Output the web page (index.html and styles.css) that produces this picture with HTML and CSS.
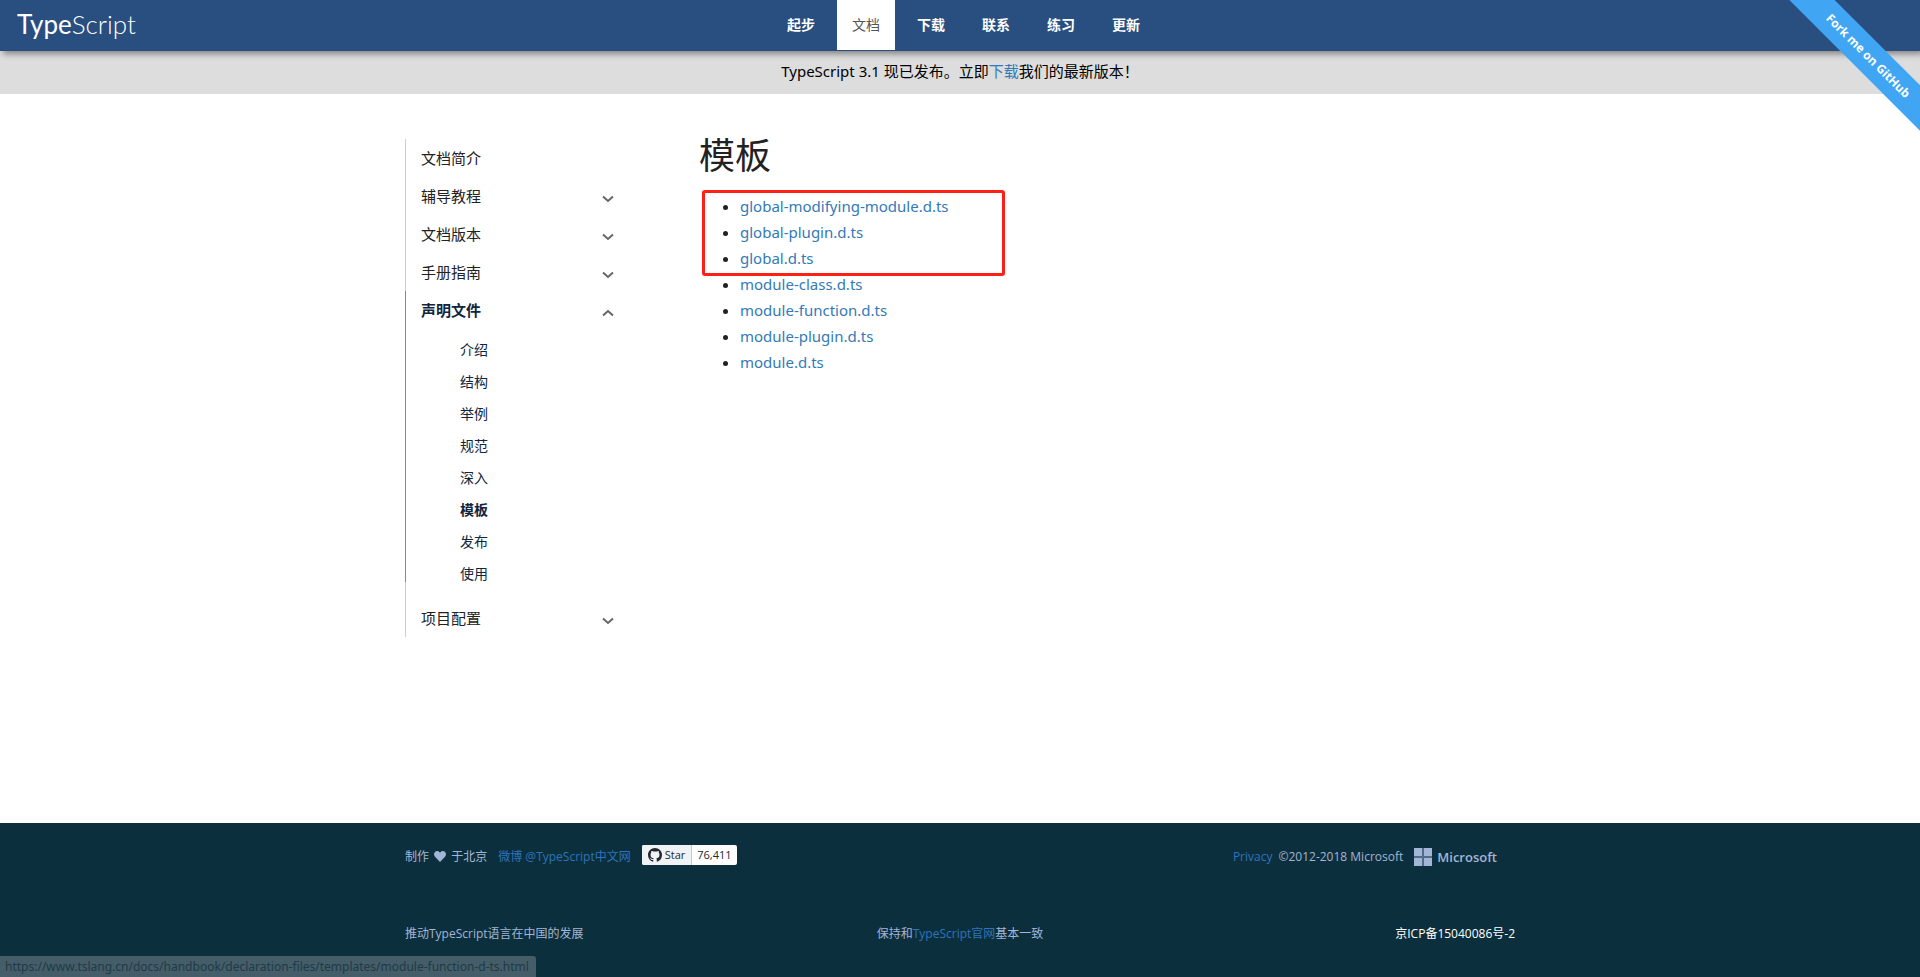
FILE: index.html
```html
<!DOCTYPE html>
<html lang="zh-CN">
<head>
<meta charset="utf-8">
<title>模板 · TypeScript</title>
<link rel="stylesheet" href="styles.css">
</head>
<body>
<header class="topbar">
  <a class="logo" href="#"><span class="logo-type">Type</span><span class="logo-script">Script</span></a>
  <nav class="nav">
    <a href="#">起步</a>
    <a href="#" class="active">文档</a>
    <a href="#">下载</a>
    <a href="#">联系</a>
    <a href="#">练习</a>
    <a href="#">更新</a>
  </nav>
</header>
<div class="ribbon-wrap"><a class="ribbon" href="#">Fork me on GitHub</a></div>
<div class="banner">TypeScript 3.1 现已发布。立即<a href="#">下载</a>我们的最新版本！</div>

<main class="container main">
  <aside class="sidebar">
    <ul class="menu">
      <li><a class="menu-link" href="#">文档简介</a></li>
      <li><button class="menu-link" type="button">辅导教程<svg class="chevron" viewBox="0 0 12 8"><path d="M1 1.500 6 6l5-4.500"/></svg></button></li>
      <li><button class="menu-link" type="button">文档版本<svg class="chevron" viewBox="0 0 12 8"><path d="M1 1.500 6 6l5-4.500"/></svg></button></li>
      <li><button class="menu-link" type="button">手册指南<svg class="chevron" viewBox="0 0 12 8"><path d="M1 1.500 6 6l5-4.500"/></svg></button></li>
      <li class="open">
        <button class="menu-link" type="button" aria-expanded="true">声明文件<svg class="chevron" viewBox="0 0 12 8"><path d="M1 6.500 6 2l5 4.500"/></svg></button>
        <ul class="submenu">
          <li><a href="#">介绍</a></li>
          <li><a href="#">结构</a></li>
          <li><a href="#">举例</a></li>
          <li><a href="#">规范</a></li>
          <li><a href="#">深入</a></li>
          <li><a href="#" class="current">模板</a></li>
          <li><a href="#">发布</a></li>
          <li><a href="#">使用</a></li>
        </ul>
      </li>
      <li><button class="menu-link" type="button">项目配置<svg class="chevron" viewBox="0 0 12 8"><path d="M1 1.500 6 6l5-4.500"/></svg></button></li>
    </ul>
  </aside>
  <article class="content">
    <h1>模板</h1>
    <div class="list-area">
      <ul class="files">
        <li><a href="#">global-modifying-module.d.ts</a></li>
        <li><a href="#">global-plugin.d.ts</a></li>
        <li><a href="#">global.d.ts</a></li>
        <li><a href="#">module-class.d.ts</a></li>
        <li><a href="#">module-function.d.ts</a></li>
        <li><a href="#">module-plugin.d.ts</a></li>
        <li><a href="#">module.d.ts</a></li>
      </ul>
      <div class="marker"></div>
    </div>
  </article>
</main>

<footer class="footer">
  <div class="container">
    <div class="foot-top">
      <div class="foot-group">
        <span class="made">制作 <svg class="heart" viewBox="0 0 12 11"><path d="M6 11 1 5.800C-.4 4.200-.2 1.900 1.200.8 2.700-.4 4.800 0 6 1.700 7.200 0 9.300-.4 10.800.8c1.400 1.100 1.600 3.400.2 5z"/></svg> 于北京</span>
        <a href="#">微博 @TypeScript中文网</a>
        <a class="star" href="#">
          <span class="star-label"><svg viewBox="0 0 16 16"><path d="M8 0C3.580 0 0 3.580 0 8c0 3.540 2.290 6.530 5.470 7.590.4.070.55-.17.55-.38 0-.19-.01-.82-.01-1.490-2.010.37-2.530-.49-2.690-.94-.09-.23-.48-.94-.82-1.130-.28-.15-.68-.52-.01-.53.63-.01 1.080.58 1.230.82.72 1.210 1.870.87 2.330.66.07-.52.28-.87.51-1.070-1.780-.2-3.640-.89-3.640-3.950 0-.87.31-1.590.82-2.150-.08-.2-.36-1.020.08-2.120 0 0 .67-.21 2.200.82.64-.18 1.320-.27 2-.27s1.360.09 2 .27c1.530-1.040 2.200-.82 2.200-.82.44 1.100.16 1.920.08 2.120.51.56.82 1.270.82 2.150 0 3.070-1.870 3.750-3.650 3.950.29.25.54.73.54 1.480 0 1.070-.01 1.930-.01 2.200 0 .21.15.46.55.38A8.010 8.010 0 0 0 16 8c0-4.420-3.580-8-8-8z"/></svg>Star</span><span class="star-count">76,411</span>
        </a>
      </div>
      <div class="foot-group foot-ms">
        <a class="privacy" href="#">Privacy</a>
        <span>©2012-2018 Microsoft</span>
        <span class="ms"><svg viewBox="0 0 18 18"><path class="ms-gap" d="M0 0h18v18H0z"/><path d="M0 0h8v8H0zM10 0h8v8h-8zM0 10h8v8H0zM10 10h8v8h-8z"/></svg>Microsoft</span>
      </div>
    </div>
    <div class="foot-bottom">
      <span>推动TypeScript语言在中国的发展</span>
      <span>保持和<a href="#">TypeScript官网</a>基本一致</span>
      <a class="icp" href="#">京ICP备15040086号-2</a>
    </div>
  </div>
</footer>
<div class="status">https://www.tslang.cn/docs/handbook/declaration-files/templates/module-function-d-ts.html</div>
</body>
</html>
```
FILE: styles.css
```css
* { box-sizing: border-box; }

body {
  margin: 0;
  min-height: 100vh;
  display: flex;
  flex-direction: column;
  background: #fff;
  color: #222;
  font: 15px/26px "Open Sans", "Noto Sans CJK SC", sans-serif;
}

a { color: #337ab7; text-decoration: none; }
ul { margin: 0; padding: 0; list-style: none; }

.container {
  width: 100%;
  max-width: 1140px;
  margin: 0 auto;
  padding: 0 15px;
}

.topbar {
  position: relative;
  z-index: 1;
  display: grid;
  grid-template-columns: 1fr auto 1fr;
  min-height: 51px;
  background: #294e80;
  box-shadow: 3px 3px 6px rgba(0, 0, 0, .4);
}

.logo {
  padding-left: 17px;
  color: #fff;
  font: 300 26px/48px Lato, sans-serif;
}
.logo-type { font-weight: 400; }

.nav { display: flex; align-items: flex-start; }
.nav a {
  margin-left: 7px;
  padding: 0 15px;
  color: #fff;
  font-size: 14px;
  font-weight: 700;
  line-height: 50px;
}
.nav .active { background: #fff; color: #555; font-weight: 400; }

.ribbon-wrap {
  position: absolute;
  z-index: 2;
  top: 0;
  right: 0;
  width: 150px;
  height: 150px;
  overflow: hidden;
  pointer-events: none;
}
.ribbon {
  position: absolute;
  top: 40px;
  right: -48px;
  width: 200px;
  background: #40a6f4;
  color: #fff;
  font-size: 12px;
  font-weight: 700;
  line-height: 32px;
  text-align: center;
  transform: rotate(45deg);
  pointer-events: auto;
}

.banner {
  padding: 7px 0 10px;
  background: #ddd;
  color: #000;
  font-family: "Noto Sans", "Noto Sans CJK SC", sans-serif;
  text-align: center;
}

.main { display: flex; flex: 1; padding-top: 45px; padding-bottom: 60px; }
.sidebar { flex: none; width: 294px; }

.menu { width: 226px; border-left: 1px solid #ccc; }
.menu-link {
  display: flex;
  align-items: center;
  justify-content: space-between;
  width: 100%;
  padding: 0 17px 0 15px;
  border: 0;
  background: none;
  color: #222;
  font: inherit;
  line-height: 38px;
  text-align: left;
}
.chevron {
  width: 12px;
  height: 8px;
  margin-top: 5px;
  fill: none;
  stroke: #666;
  stroke-width: 2;
}
.open { margin: 0 0 17px -1px; border-left: 1px solid #888; }
.open > .menu-link { color: #0f2540; font-weight: 700; }
.submenu {
  display: grid;
  gap: 16px;
  padding: 13px 0 0 54px;
  font-size: 14px;
  line-height: 16px;
}
.submenu a { color: #0f2540; }
.submenu .current { font-weight: 700; }

.content { flex: 1; }
h1 { margin: 0 0 14px; font-size: 36px; font-weight: 400; line-height: 34px; }
.list-area { position: relative; padding-top: 6px; }
.files {
  padding-left: 41px;
  font-family: "Noto Sans", sans-serif;
  list-style: disc;
}
.marker {
  position: absolute;
  top: 3px;
  left: 3px;
  width: 303px;
  height: 86px;
  border: 3px solid #ff2015;
  border-radius: 3px;
  pointer-events: none;
}

.footer {
  padding: 22px 0 31px;
  background: #0c2f3d;
  color: #a3b5d6;
  font-size: 12px;
  line-height: 24px;
}
.footer a { color: #2c74bc; }
.foot-top {
  display: flex;
  justify-content: space-between;
  margin-bottom: 53px;
}
.foot-bottom {
  display: grid;
  grid-template-columns: 1fr auto 1fr;
}
.foot-group { display: flex; align-items: center; gap: 11px; }
.heart { width: 12px; height: 11px; margin: 0 2px; fill: #a3b5d6; vertical-align: -1px; }
.footer .star {
  display: flex;
  align-self: flex-start;
  border-radius: 2px;
  overflow: hidden;
  background: #fff;
  color: #24292e;
  font-size: 11px;
  font-weight: 500;
  line-height: 20px;
}
.star-label {
  display: flex;
  align-items: center;
  gap: 3px;
  padding: 0 6px;
  border-right: 1px solid #c5c9cc;
  background: #eff3f6;
}
.star svg { width: 14px; height: 14px; fill: #24292e; }
.star-count { padding: 0 5px; }
.foot-ms { gap: 6px; padding-right: 18px; }
.ms {
  display: flex;
  align-items: center;
  gap: 5px;
  margin-left: 5px;
  font-size: 13px;
  font-weight: 600;
}
.ms svg { width: 18px; height: 18px; fill: #a3b5d6; }
.ms .ms-gap { fill: #536b86; }
.footer .icp { color: #fff; justify-self: end; }

.status {
  position: fixed;
  bottom: 0;
  left: 0;
  padding: 0 7px 0 5px;
  border-radius: 0 3px 0 0;
  background: #455d68;
  color: #1e3b47;
  font-family: "Noto Sans", sans-serif;
  font-size: 12px;
  line-height: 21px;
}
```
